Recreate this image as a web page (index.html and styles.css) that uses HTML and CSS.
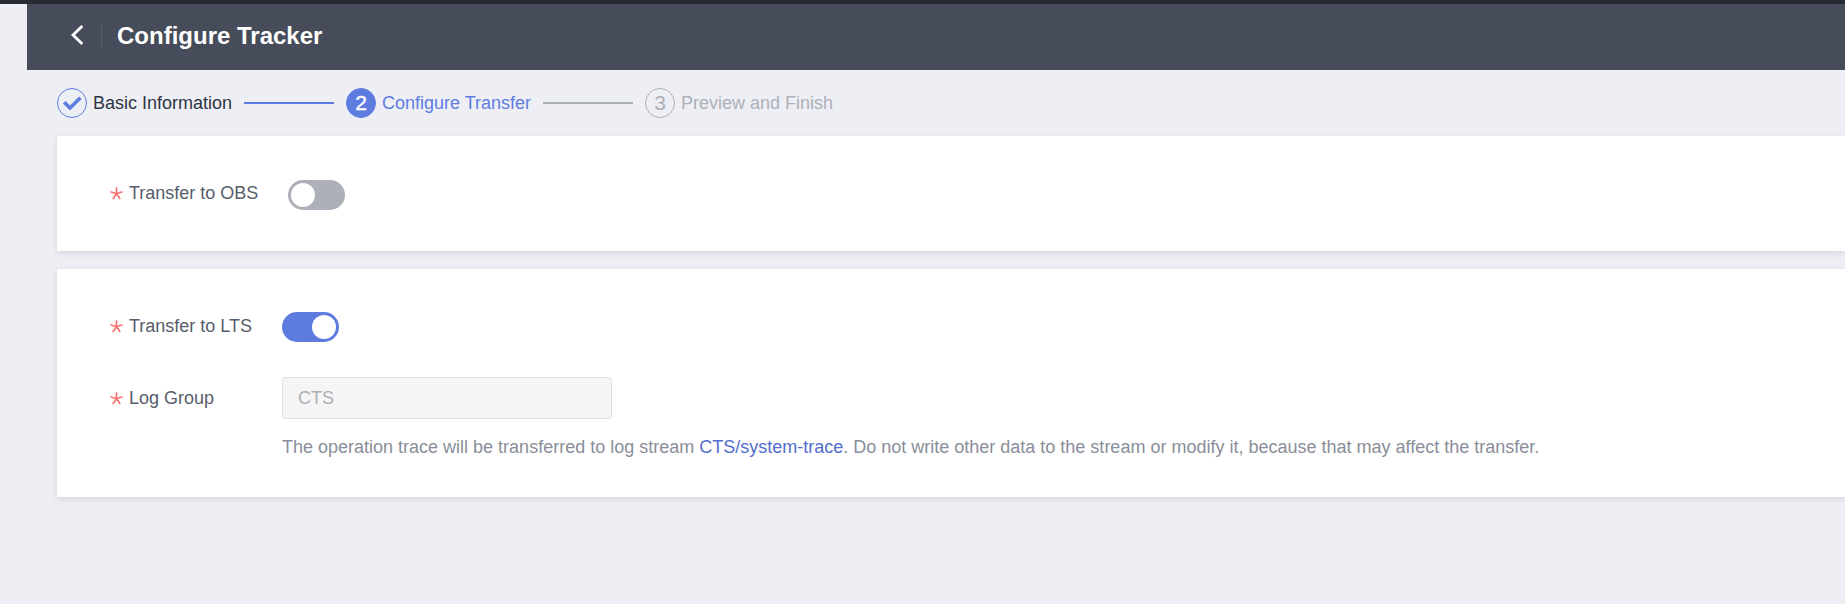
FILE: index.html
```html
<!DOCTYPE html>
<html lang="en">
<head>
<meta charset="utf-8">
<title>Configure Tracker</title>
<link rel="stylesheet" href="styles.css">
</head>
<body>
<div class="topbar"></div>
<header class="header">
  <svg class="back" width="14" height="22" viewBox="0 0 14 22"><path d="M12.3 2 L3 11 L12.3 20" fill="none" stroke="#fff" stroke-width="2.8"/></svg>
  <span class="divider"></span>
  <h1 class="title">Configure Tracker</h1>
</header>
<main class="main">
  <nav class="steps">
    <div class="step done">
      <svg class="badge-icon" width="30" height="30" viewBox="0 0 30 30"><circle cx="15" cy="15" r="14.5" fill="none" stroke="#5e7ce0"/><path d="M7.2 14.2 L13 20 L23.4 9.8" fill="none" stroke="#5e7ce0" stroke-width="3.6"/></svg>
      <span class="step-label label-basic">Basic Information</span>
    </div>
    <span class="line line-done"></span>
    <div class="step active">
      <span class="badge">2</span>
      <span class="step-label label-transfer">Configure Transfer</span>
    </div>
    <span class="line"></span>
    <div class="step">
      <span class="badge">3</span>
      <span class="step-label">Preview and Finish</span>
    </div>
  </nav>
  <section class="card card-obs">
    <div class="row">
      <span class="label label-obs"><svg class="required" width="13" height="13" viewBox="0 0 13 13"><path d="M6.5 .3V6.7M.5 4.8L6.5 6.7L12.5 4.8M2.8 12L6.5 6.7L10.2 12"/></svg>Transfer to OBS</span>
      <span class="toggle"><span class="knob"></span></span>
    </div>
  </section>
  <section class="card card-lts">
    <div class="row">
      <span class="label"><svg class="required" width="13" height="13" viewBox="0 0 13 13"><path d="M6.5 .3V6.7M.5 4.8L6.5 6.7L12.5 4.8M2.8 12L6.5 6.7L10.2 12"/></svg>Transfer to LTS</span>
      <span class="toggle on"><span class="knob"></span></span>
    </div>
    <div class="row row-group">
      <span class="label"><svg class="required" width="13" height="13" viewBox="0 0 13 13"><path d="M6.5 .3V6.7M.5 4.8L6.5 6.7L12.5 4.8M2.8 12L6.5 6.7L10.2 12"/></svg>Log Group</span>
      <span class="input">CTS</span>
    </div>
    <p class="hint">The operation trace will be transferred to log stream <a class="link">CTS/system-trace</a>. Do not write other data to the stream or modify it, because that may affect the transfer.</p>
  </section>
</main>
</body>
</html>
```
FILE: styles.css
```css
* { box-sizing: border-box; }
body {
  margin: 0;
  height: 604px;
  overflow: hidden;
  background: #eeeff5;
  font: 18px/24px "Liberation Sans", Arial, sans-serif;
  color: #575d6c;
}
.topbar { height: 4px; background: #282b33; }
.header {
  display: flex;
  align-items: center;
  height: 66px;
  margin-left: 27px;
  padding: 0 0 4px 43px;
  background: #464c59;
}
.back { display: block; }
.divider { width: 1px; height: 24px; margin: 0 15px 0 17px; background: #5a5f6c; }
.title { margin: 0; padding-top: 2px; font-size: 24px; line-height: 30px; font-weight: bold; color: #fff; }
.main { padding-left: 57px; }
.steps { display: flex; align-items: center; height: 66px; }
.step { display: flex; align-items: center; gap: 6px; color: #adb0b8; white-space: nowrap; }
.done { color: #2f3544; }
.active { color: #5e7ce0; }
.badge-icon { display: block; }
.badge {
  width: 30px;
  height: 30px;
  border: 1px solid #adb0b8;
  border-radius: 50%;
  font-size: 21px;
  line-height: 28px;
  text-align: center;
}
.active .badge { border-color: #5e7ce0; background: #5e7ce0; color: #fff; -webkit-text-stroke: .4px #fff; }
.label-basic { width: 139px; }
.label-transfer { width: 149px; }
.line { width: 90px; height: 2px; margin: 0 12px; background: #adb0b8; }
.line-done { background: #5e7ce0; }
.card { background: #fff; box-shadow: 0 2px 6px rgba(37, 43, 58, .12); }
.card-obs { height: 115px; padding: 44px 0 0 53px; }
.card-lts { height: 228px; margin-top: 18px; padding: 43px 0 0 53px; }
.row { display: flex; align-items: center; height: 30px; }
.required { flex: none; margin-right: 6px; fill: none; stroke: #f66f6a; stroke-width: 1.6; }
.label { display: flex; align-items: center; width: 172px; padding-bottom: 2px; white-space: nowrap; }
.label-obs { width: 178px; padding-bottom: 4px; }
.toggle { display: flex; width: 57px; height: 30px; padding: 3px; border-radius: 15px; background: #adb0b8; }
.on { justify-content: flex-end; background: #5e7ce0; }
.knob { width: 24px; height: 24px; border-radius: 50%; background: #fff; }
.row-group { height: 42px; margin-top: 35px; }
.row-group .label { padding-bottom: 0; }
.input {
  width: 330px;
  height: 42px;
  padding: 0 15px;
  border: 1px solid #dfe1e6;
  border-radius: 3px;
  background: #f5f5f5;
  color: #adb0b8;
  line-height: 40px;
}
.hint { margin: 16px 0 0 172px; color: #8a8e99; white-space: nowrap; }
.link { color: #526ecc; }
```
